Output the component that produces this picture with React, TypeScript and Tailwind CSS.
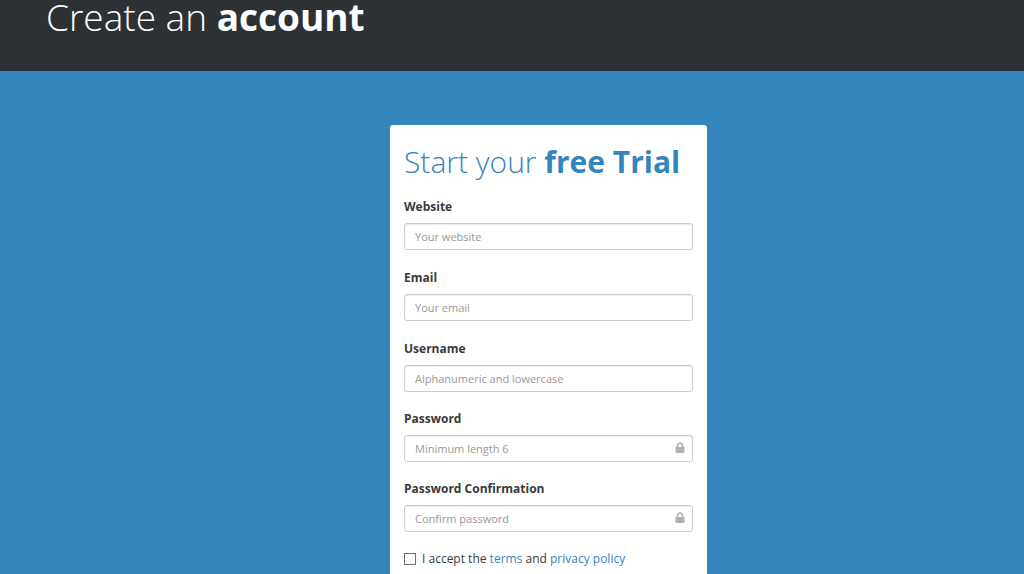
import React from "react";

const textFields = [
  { id: "website", label: "Website", type: "text", placeholder: "Your website" },
  { id: "email", label: "Email", type: "email", placeholder: "Your email" },
  { id: "username", label: "Username", type: "text", placeholder: "Alphanumeric and lowercase" },
];

const passwordFields = [
  { id: "password", label: "Password", type: "password", placeholder: "Minimum length 6", lock: true },
  { id: "confirm", label: "Password Confirmation", type: "password", placeholder: "Confirm password", lock: true },
];

type FieldProps = {
  id: string;
  label: string;
  type: string;
  placeholder: string;
  lock?: boolean;
};

const LockIcon = () => (
  <svg viewBox="0 0 10 12" className="absolute top-[7px] right-2 h-3 w-[10px] text-[#b0b0b0]" aria-hidden="true">
    <path d="M2.5 6V3.5a2.5 2.5 0 0 1 5 0V6" fill="none" stroke="currentColor" strokeWidth="1.5" />
    <rect x="0.5" y="5" width="9" height="6" rx="0.6" fill="currentColor" />
  </svg>
);

const Field = ({ id, label, type, placeholder, lock }: FieldProps) => {
  return (
    <div>
      <label htmlFor={id} className="mb-[7px] block text-[12px] leading-[18px] font-bold text-[#3a3a3a]">
        {label}
      </label>
      <div className="relative">
        <input
          id={id}
          type={type}
          placeholder={placeholder}
          className="block h-[27px] w-full rounded-[3px] border border-[#ccc] bg-white px-[10px] text-[11px] text-[#555] shadow-[inset_0_1px_1px_rgba(0,0,0,0.075)] placeholder:text-[#999]"
        />
        {lock && <LockIcon />}
      </div>
    </div>
  );
};

const App = () => {
  return (
    <div className="min-h-screen bg-[#3585bd] font-['Open_Sans',sans-serif]">
      <header className="bg-[#2d3134] px-[46px] pb-[37px]">
        <h1 className="text-[37px] leading-[34px] font-light text-white">
          Create an <b className="font-bold">account</b>
        </h1>
      </header>
      <main className="flex justify-center px-4 pt-[54px]">
        <form className="ml-[73px] w-[317px] rounded-[3px] bg-white px-[14px] pt-[17px] pb-6">
          <h2 className="mb-4 text-[30px] leading-[40px] font-light text-[#3585bd]">
            Start your <b className="font-bold">free Trial</b>
          </h2>
          <div className="mb-[18px] flex flex-col gap-[19px]">
            {textFields.map((field) => (
              <Field key={field.id} {...field} />
            ))}
          </div>
          <div className="mb-[18px] flex flex-col gap-[18px]">
            {passwordFields.map((field) => (
              <Field key={field.id} {...field} />
            ))}
          </div>
          <div className="flex items-center text-[12px] leading-[18px] text-[#3a3a3a]">
            <input
              id="accept"
              type="checkbox"
              className="mr-[6px] size-3 appearance-none border border-[#707070] bg-white checked:bg-[#3585bd]"
            />
            <label htmlFor="accept">
              I accept the{" "}
              <a href="#terms" className="text-[#3585bd]">terms</a> and{" "}
              <a href="#privacy" className="text-[#3585bd]">privacy policy</a>
            </label>
          </div>
        </form>
      </main>
    </div>
  );
};

export default App;
